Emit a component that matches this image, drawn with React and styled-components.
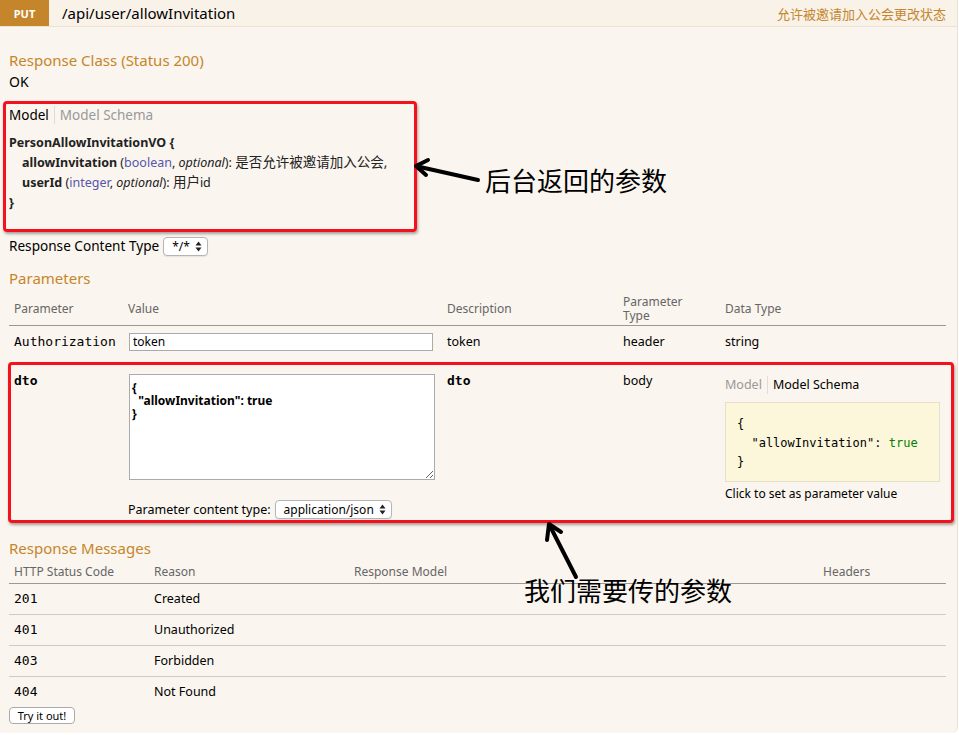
import React from "react";
import styled, { createGlobalStyle } from "styled-components";

const GlobalStyle = createGlobalStyle`
  body {
    margin: 0;
    background: #ffffff;
  }
`;

const orange = "#c5862b";
const sans = `"Noto Sans", "Noto Sans CJK SC", sans-serif`;
const mono = `"DejaVu Sans Mono", "Liberation Mono", monospace`;

const Page = styled.div`
  position: relative;
  width: 958px;
  height: 735px;
  overflow: hidden;
  font-family: ${sans};
  color: #000;
`;

const Heading = styled.div`
  display: flex;
  align-items: center;
  height: 26px;
  background: #f9f2e9;
  border-bottom: 1px solid #efe2d0;
  border-right: 1px solid #efe2d0;
`;

const Method = styled.span`
  width: 49px;
  height: 100%;
  display: flex;
  align-items: center;
  justify-content: center;
  background: ${orange};
  color: #fff;
  font-size: 11px;
  font-weight: 700;
`;

const Path = styled.span`
  flex: 1;
  padding-left: 13px;
  font-size: 15px;
  color: #000;
`;

const Summary = styled.span`
  padding-right: 11px;
  font-size: 13px;
  color: ${orange};
`;

const Content = styled.div`
  display: flow-root;
  height: 706px;
  box-sizing: border-box;
  padding: 0 11px 0 9px;
  background: #faf5ee;
  border-right: 1px solid #efe2d0;
  border-bottom-right-radius: 6px;
`;

const Title = styled.h4`
  margin: ${(p) => p.$mt || 0}px 0 0;
  font-size: 15px;
  font-weight: 400;
  line-height: 20px;
  color: ${orange};
`;

const Plain = styled.div`
  margin-top: ${(p) => p.$mt || 0}px;
  font-size: ${(p) => p.$size || 13}px;
  line-height: ${(p) => p.$lh || 18}px;
  display: flex;
  align-items: center;
`;

const Tabs = styled.div`
  display: flex;
  align-items: center;
  margin-top: ${(p) => p.$mt || 0}px;
  font-size: ${(p) => p.$size || 12.5}px;
  line-height: 18px;
`;

const Tab = styled.span`
  color: ${(p) => (p.$active ? "#000" : "#999")};
  padding: 0 5px;
  &:first-child {
    padding-left: 0;
    border-right: 1px solid #ddd;
  }
`;

const Signature = styled.div`
  margin-top: 9px;
  font-size: 12.5px;
  line-height: 20px;
  color: #222;
`;

const Line = styled.div`
  height: 20px;
  padding-left: ${(p) => (p.$indent ? 13 : 0)}px;
  white-space: nowrap;
`;

const Cjk = styled.span`
  font-size: 13.5px;
  line-height: 1;
`;

const Strong = styled.span`
  font-weight: 700;
  color: #222;
`;

const TypeName = styled.span`
  color: #55a;
`;

const Select = styled.span`
  display: inline-flex;
  align-items: center;
  gap: 5px;
  height: 19px;
  box-sizing: border-box;
  margin-left: ${(p) => p.$ml || 4}px;
  padding: 0 5px 0 ${(p) => p.$pl || 8}px;
  background: #fff;
  border: 1px solid #b5b5b5;
  border-radius: 4px;
  box-shadow: 0 1px 1px rgba(0, 0, 0, 0.08);
  font-size: 12px;
  line-height: 17px;
  color: #000;
`;

const Table = styled.table`
  width: 937px;
  margin-top: ${(p) => p.$mt || 0}px;
  border-collapse: collapse;
  table-layout: fixed;
`;

const Th = styled.th`
  height: ${(p) => p.$h || 22}px;
  padding: 0 0 0 5px;
  text-align: left;
  vertical-align: middle;
  font-size: 12px;
  font-weight: 400;
  line-height: 14px;
  color: #666;
  border-bottom: 1px solid #999;
`;

const Tr = styled.tr`
  border-bottom: ${(p) => (p.$last ? "none" : "1px solid #ccc")};
`;

const Td = styled.td`
  height: ${(p) => p.$h || 30}px;
  padding: ${(p) => (p.$top ? "16px 0 3px 5px" : "0 0 0 5px")};
  vertical-align: ${(p) => (p.$top ? "top" : "middle")};
  font-family: ${(p) => (p.$mono ? mono : sans)};
  font-size: ${(p) => (p.$mono ? 13 : 12.5)}px;
  font-weight: ${(p) => (p.$bold ? 700 : 400)};
  line-height: 16px;
  color: #000;
`;

const TextInput = styled.input`
  display: block;
  width: 304px;
  height: 18px;
  box-sizing: border-box;
  margin: 0 0 0 1px;
  padding: 0 3px;
  border: 1px solid #aaa;
  background: #fff;
  font-family: ${sans};
  font-size: 12px;
  color: #000;
  outline: none;
`;

const Body = styled.textarea`
  display: block;
  width: 306px;
  height: 106px;
  box-sizing: border-box;
  margin: 1px 0 0 1px;
  padding: 6px 2px 2px;
  border: 1px solid #aaa;
  background: #fff;
  font-family: ${sans};
  font-size: 12px;
  font-weight: 700;
  line-height: 13px;
  color: #000;
  outline: none;
`;

const ContentType = styled.div`
  display: flex;
  align-items: center;
  margin-top: 20px;
  font-size: 12.5px;
  line-height: 19px;
`;

const Snippet = styled.pre`
  margin: 8px 0 0;
  width: 215px;
  height: 80px;
  box-sizing: border-box;
  padding: 12px 11px 0;
  background: #fcf6db;
  border: 1px solid #e5e0c6;
  font-family: ${mono};
  font-size: 12px;
  line-height: 19px;
  color: #000;
`;

const Bool = styled.span`
  color: #008000;
`;

const Hint = styled.div`
  margin-top: 4px;
  font-size: 12px;
  line-height: 16px;
`;

const TryButton = styled.button`
  display: block;
  height: 17px;
  width: 66px;
  margin-top: 0;
  padding: 0;
  background: #fff;
  border: 1px solid #aaa;
  border-radius: 4px;
  font-family: ${sans};
  font-size: 11px;
  line-height: 15px;
  color: #000;
`;

const RedFrame = styled.div`
  position: absolute;
  left: ${(p) => p.$x}px;
  top: ${(p) => p.$y}px;
  width: ${(p) => p.$w}px;
  height: ${(p) => p.$h}px;
  box-sizing: border-box;
  border: 3px solid #f5101e;
  border-radius: 4px;
  box-shadow: 1px 2px 3px rgba(0, 0, 0, 0.35);
  pointer-events: none;
`;

const Note = styled.div`
  position: absolute;
  left: ${(p) => p.$x}px;
  top: ${(p) => p.$y}px;
  font-family: "Noto Sans CJK SC", sans-serif;
  font-size: 26px;
  line-height: 30px;
  color: #000;
  white-space: nowrap;
`;

const Arrows = styled.svg`
  position: absolute;
  left: 0;
  top: 0;
  pointer-events: none;
`;

function Updown() {
  return (
    <svg width="7" height="11" viewBox="0 0 7 11">
      <path d="M3.5 0.5 L6.5 4.5 H0.5 Z M3.5 10.5 L6.5 6.5 H0.5 Z" fill="#222" />
    </svg>
  );
}

export default function App() {
  return (
    <Page>
      <GlobalStyle />
      <Heading>
        <Method>PUT</Method>
        <Path>/api/user/allowInvitation</Path>
        <Summary>允许被邀请加入公会更改状态</Summary>
      </Heading>
      <Content>
        <Title $mt={23}>Response Class (Status 200)</Title>
        <Plain $size={14} $mt={3}>OK</Plain>

        <Tabs $size={13.5} $mt={15}>
          <Tab $active>Model</Tab>
          <Tab>Model Schema</Tab>
        </Tabs>
        <Signature>
          <Line>
            <Strong>PersonAllowInvitationVO {"{"}</Strong>
          </Line>
          <Line $indent>
            <Strong>allowInvitation</Strong> (<TypeName>boolean</TypeName>, <i>optional</i>): <Cjk>是否允许被邀请加入公会,</Cjk>
          </Line>
          <Line $indent>
            <Strong>userId</Strong> (<TypeName>integer</TypeName>, <i>optional</i>): <Cjk>用户</Cjk>id
          </Line>
          <Line>
            <Strong>{"}"}</Strong>
          </Line>
        </Signature>

        <Plain $size={13.6} $mt={23} $lh={20}>
          Response Content Type
          <Select>
            */* <Updown />
          </Select>
        </Plain>

        <Title $mt={12}>Parameters</Title>
        <Table $mt={4}>
          <colgroup>
            <col style={{ width: 114 }} />
            <col style={{ width: 319 }} />
            <col style={{ width: 176 }} />
            <col style={{ width: 102 }} />
            <col style={{ width: 226 }} />
          </colgroup>
          <thead>
            <tr>
              <Th $h={33}>Parameter</Th>
              <Th $h={33}>Value</Th>
              <Th $h={33}>Description</Th>
              <Th $h={33}>
                Parameter
                <br />
                Type
              </Th>
              <Th $h={33}>Data Type</Th>
            </tr>
          </thead>
          <tbody>
            <tr>
              <Td $mono $h={31}>Authorization</Td>
              <Td $h={31}>
                <TextInput readOnly value="token" />
              </Td>
              <Td $h={31}>token</Td>
              <Td $h={31}>header</Td>
              <Td $h={31}>string</Td>
            </tr>
            <tr>
              <Td $mono $bold $top>dto</Td>
              <Td $top>
                <Body readOnly defaultValue={'{\n  "allowInvitation": true\n}'} />
                <ContentType>
                  Parameter content type:
                  <Select $ml={4} $pl={8}>
                    application/json <Updown />
                  </Select>
                </ContentType>
              </Td>
              <Td $mono $bold $top>dto</Td>
              <Td $top>body</Td>
              <Td $top>
                <Tabs $mt={3}>
                  <Tab>Model</Tab>
                  <Tab $active>Model Schema</Tab>
                </Tabs>
                <Snippet>
                  {"{\n  \"allowInvitation\": "}
                  <Bool>true</Bool>
                  {"\n}"}
                </Snippet>
                <Hint>Click to set as parameter value</Hint>
              </Td>
            </tr>
          </tbody>
        </Table>

        <Title $mt={16}>Response Messages</Title>
        <Table $mt={3}>
          <colgroup>
            <col style={{ width: 140 }} />
            <col style={{ width: 200 }} />
            <col style={{ width: 469 }} />
            <col style={{ width: 128 }} />
          </colgroup>
          <thead>
            <tr>
              <Th>HTTP Status Code</Th>
              <Th>Reason</Th>
              <Th>Response Model</Th>
              <Th>Headers</Th>
            </tr>
          </thead>
          <tbody>
            {[
              ["201", "Created"],
              ["401", "Unauthorized"],
              ["403", "Forbidden"],
              ["404", "Not Found"],
            ].map(([code, reason], i) => (
              <Tr key={code} $last={i === 3}>
                <Td $mono>{code}</Td>
                <Td>{reason}</Td>
                <Td />
                <Td />
              </Tr>
            ))}
          </tbody>
        </Table>
        <TryButton>Try it out!</TryButton>
      </Content>

      <RedFrame $x={3} $y={101} $w={414} $h={131} />
      <RedFrame $x={8} $y={362} $w={946} $h={161} />
      <Arrows width="959" height="735" viewBox="0 0 959 735">
        <g stroke="#000" strokeWidth="4" strokeLinecap="round" strokeLinejoin="round" fill="none">
          <path d="M478 180 L420 167" />
          <path d="M428 160 L416 166 L426 175" />
          <path d="M576 577 L551 528" />
          <path d="M547 540 L549 524 L561 532" />
        </g>
      </Arrows>
      <Note $x={485} $y={165}>后台返回的参数</Note>
      <Note $x={524} $y={575}>我们需要传的参数</Note>
    </Page>
  );
}
